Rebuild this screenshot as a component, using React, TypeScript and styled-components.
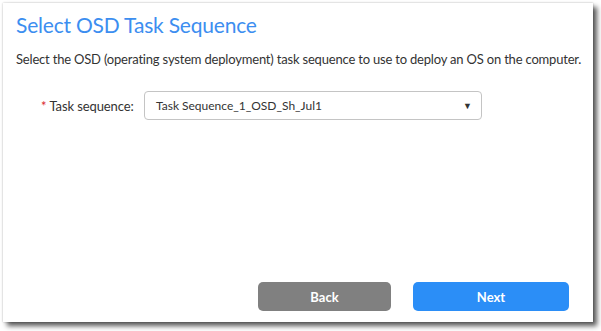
import React, { useState } from "react";
import styled, { createGlobalStyle } from "styled-components";

const GlobalStyle = createGlobalStyle`
  html, body {
    margin: 0;
    padding: 0;
    background: #ffffff;
  }
  body {
    font-family: Lato, "Liberation Sans", sans-serif;
  }
`;

const Page = styled.div`
  width: 601px;
  height: 331px;
  padding: 3px 8px 9px 3px;
  box-sizing: border-box;
`;

const Dialog = styled.div`
  width: 590px;
  height: 319px;
  background: #ffffff;
  box-shadow: 0 0 2px rgba(0, 0, 0, 0.25), 4px 4px 5px rgba(0, 0, 0, 0.65);
  display: flex;
  flex-direction: column;
  box-sizing: border-box;
  padding: 7px 24px 11px 13px;
`;

const Title = styled.h1`
  margin: 0;
  font-size: 21px;
  font-weight: 400;
  letter-spacing: -0.2px;
  color: #3c8ef0;
  line-height: 30px;
`;

const Description = styled.p`
  margin: 10px 0 0;
  font-size: 13px;
  letter-spacing: -0.19px;
  color: #333333;
  line-height: 18px;
  white-space: nowrap;
`;

const FieldRow = styled.div`
  display: flex;
  align-items: center;
  margin-top: 23px;
  padding-left: 25px;
`;

const Label = styled.label`
  width: 103px;
  font-size: 13px;
  letter-spacing: -0.1px;
  color: #333333;
`;

const Required = styled.span`
  color: #d9262e;
  margin-right: 3px;
`;

const SelectBox = styled.div`
  width: 338px;
  height: 29px;
  box-sizing: border-box;
  border: 1px solid #c4c4c4;
  border-radius: 4px;
  display: flex;
  align-items: center;
  justify-content: space-between;
  padding: 0 9px 0 11px;
  font-size: 12px;
  color: #333333;
  cursor: pointer;
`;

const Arrow = styled.span`
  font-size: 9px;
  color: #333333;
`;

const Spacer = styled.div`
  flex: 1;
`;

const Footer = styled.div`
  display: flex;
  justify-content: flex-end;
  gap: 22px;
`;

const Button = styled.button<{ $primary?: boolean }>`
  height: 29px;
  width: ${(p) => (p.$primary ? "156px" : "133px")};
  border: none;
  border-radius: 5px;
  background: ${(p) => (p.$primary ? "#2b8ef7" : "#808080")};
  color: #ffffff;
  font-family: Lato, "Liberation Sans", sans-serif;
  font-size: 13px;
  font-weight: 700;
  cursor: pointer;
`;

const App: React.FC = () => {
  const [sequence] = useState<string>("Task Sequence_1_OSD_Sh_Jul1");

  return (
    <>
      <GlobalStyle />
      <Page>
        <Dialog>
          <Title>Select OSD Task Sequence</Title>
          <Description>
            Select the OSD (operating system deployment) task sequence to use to
            deploy an OS on the computer.
          </Description>
          <FieldRow>
            <Label>
              <Required>*</Required>Task sequence:
            </Label>
            <SelectBox>
              <span>{sequence}</span>
              <Arrow>▼</Arrow>
            </SelectBox>
          </FieldRow>
          <Spacer />
          <Footer>
            <Button>Back</Button>
            <Button $primary>Next</Button>
          </Footer>
        </Dialog>
      </Page>
    </>
  );
};

export default App;
